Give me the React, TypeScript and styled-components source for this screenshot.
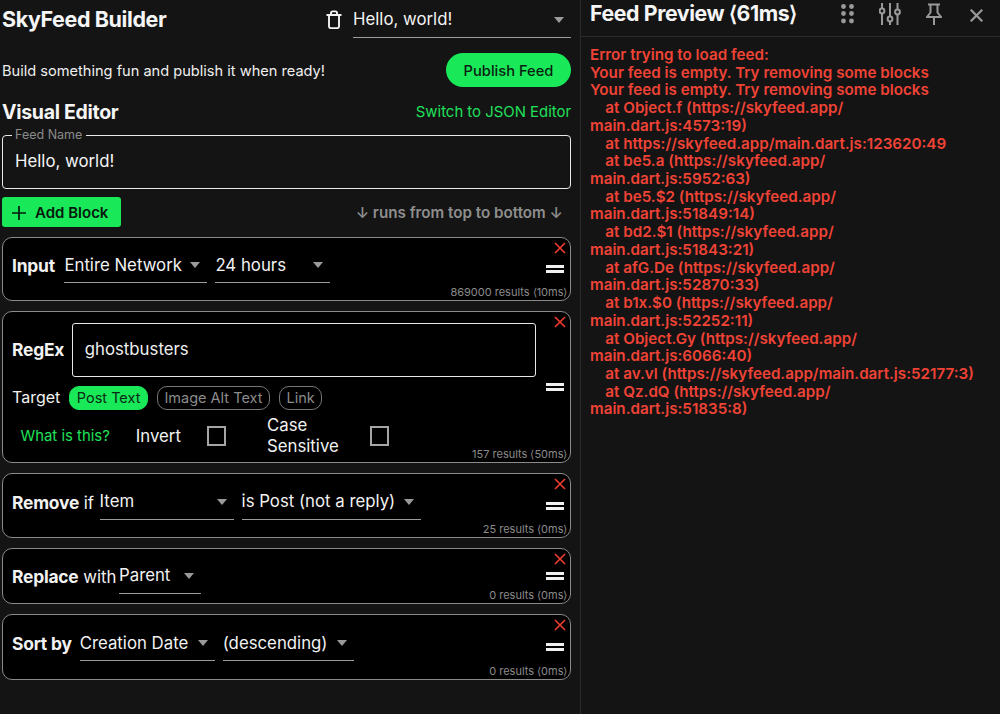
import styled, { createGlobalStyle } from "styled-components"

const GlobalStyle = createGlobalStyle`
html, body {
  margin: 0;
  padding: 0;
  background: #141414;
}
body {
  font-family: Inter, "Liberation Sans", sans-serif;
  color: #fff;
}
`

const Page = styled.div`
display: flex;
width: 1000px;
height: 714px;
overflow: hidden;
background: #141414;
`

const Editor = styled.div`
width: 569px;
padding-left: 2px;
padding-right: 9px;
display: flex;
flex-direction: column;
border-right: 1px solid #2b2b2b;
flex-shrink: 0;
`

const HeaderRow = styled.div`
display: flex;
align-items: center;
justify-content: space-between;
height: 38px;
`

const Title = styled.h1`
margin: 0;
font-size: 21.5px;
font-weight: 700;
letter-spacing: -0.4px;
color: #f5f5f5;
`

const FeedPicker = styled.div`
display: flex;
align-items: center;
gap: 11px;
`

const PublishRow = styled.div`
display: flex;
align-items: center;
justify-content: space-between;
margin-top: 15px;
height: 34px;
`

const Tagline = styled.span`
padding-top: 2px;
font-size: 14.6px;
color: #efefef;
`

const PublishButton = styled.button`
width: 125px;
height: 34px;
border: none;
border-radius: 17px;
background: #19e858;
color: #0a1d10;
font-family: inherit;
font-size: 14.7px;
font-weight: 500;
padding: 2px 0 0;
`

const SectionRow = styled.div`
display: flex;
align-items: center;
justify-content: space-between;
margin-top: 11px;
height: 28px;
`

const SectionTitle = styled.h2`
margin: 0;
font-size: 19.5px;
font-weight: 700;
letter-spacing: -0.3px;
color: #f5f5f5;
`

const GreenLink = styled.span`
font-size: 14.9px;
color: #20e05a;
`

const NameField = styled.fieldset`
margin: 2px 0 0;
padding: 0 12px;
height: 61px;
box-sizing: border-box;
border: 1.5px solid #e8e8e8;
border-radius: 4px;
background: #141414;
font-size: 16.8px;
color: #f4f4f4;
line-height: 38px;
min-width: 0;
`

const NameLegend = styled.legend`
padding: 0 4px 0 3px;
margin-left: -3px;
font-size: 12.5px;
line-height: 14px;
color: #8b8b8b;
`

const ActionRow = styled.div`
display: flex;
align-items: center;
justify-content: space-between;
margin-top: 8px;
height: 30px;
padding-right: 8px;
`

const AddButton = styled.button`
display: flex;
align-items: center;
gap: 9px;
width: 119px;
height: 30px;
padding: 1px 0 0 10px;
border: none;
border-radius: 3px;
background: #19e858;
color: #07190c;
font-family: inherit;
font-size: 15px;
font-weight: 600;
`

const RunsHint = styled.span`
padding-top: 1px;
font-size: 15.2px;
font-weight: 600;
color: #8e8e8e;
`

const BlockList = styled.div`
display: flex;
flex-direction: column;
gap: 10px;
margin-top: 10px;
`

const Block = styled.section<{ $height: number }>`
position: relative;
display: flex;
align-items: center;
height: ${(p) => p.$height}px;
box-sizing: border-box;
padding-left: 9px;
padding-right: 6.5px;
background: #000;
border: 1.5px solid #8a8a8a;
border-radius: 10px;
`

const BlockBody = styled.div`
flex: 1;
display: flex;
flex-direction: column;
min-width: 0;
`

const Line = styled.div<{ $gap?: number; $lift?: number; $top?: number; $end?: number }>`
display: flex;
align-items: center;
gap: ${(p) => p.$gap ?? 8}px;
margin-top: ${(p) => p.$top ?? -(p.$lift ?? 0)}px;
margin-right: ${(p) => p.$end ?? 0}px;
font-size: 16.8px;
color: #f2f2f2;
white-space: pre;
`

const Lead = styled.span<{ $after?: number }>`
margin-right: ${(p) => p.$after ?? 0}px;
`

const Strong = styled.b`
font-weight: 700;
font-size: 17.4px;
letter-spacing: -0.2px;
`

const Plain = styled.span`
font-weight: 400;
`

const TargetLabel = styled.span`
font-size: 16px;
margin-top: -2px;
`

const SelectBox = styled.div<{ $width: number; $big?: boolean }>`
display: flex;
align-items: center;
justify-content: space-between;
box-sizing: border-box;
width: ${(p) => p.$width}px;
height: ${(p) => (p.$big ? 37 : 35)}px;
padding-right: 7px;
padding-top: ${(p) => (p.$big ? 2 : 0)}px;
padding-bottom: 1px;
border-bottom: 1px solid #9c9c9c;
color: #f2f2f2;
font-size: 16.8px;
`

const Caret = styled.span`
flex-shrink: 0;
width: 0;
height: 0;
border-left: 5.5px solid transparent;
border-right: 5.5px solid transparent;
border-top: 6px solid #9a9a9a;
margin-top: 1px;
`

const SelectText = styled.span`
white-space: pre;
`

const RemoveIcon = styled.svg`
position: absolute;
top: 4px;
right: 4px;
width: 12px;
height: 12px;
`

const DragHandle = styled.div`
flex-shrink: 0;
width: 18px;
height: 8px;
border-top: 3px solid #f0f0f0;
border-bottom: 3px solid #f0f0f0;
box-sizing: border-box;
`

const ResultCount = styled.span`
position: absolute;
right: 2.5px;
bottom: 1.5px;
font-size: 11px;
color: #8b8b8b;
`

const RegexInput = styled.div`
flex: 1;
height: 54px;
box-sizing: border-box;
padding-left: 12px;
border: 1.5px solid #e8e8e8;
border-radius: 3px;
font-size: 16.8px;
line-height: 51px;
color: #efefef;
`

const Chip = styled.span<{ $active?: boolean }>`
display: inline-flex;
align-items: center;
justify-content: center;
box-sizing: border-box;
height: 24px;
padding: 0 6.5px;
border-radius: 10px;
font-size: 14.5px;
background: ${(p) => (p.$active ? "#19e858" : "transparent")};
color: ${(p) => (p.$active ? "#0a2a14" : "#8b8b8b")};
border: 1px solid ${(p) => (p.$active ? "#19e858" : "#777")};
`

const WhatLink = styled(GreenLink)`
margin-left: 8.5px;
margin-right: 26px;
`

const Checkbox = styled.span<{ $left: number; $right?: number }>`
flex-shrink: 0;
width: 19px;
height: 20px;
box-sizing: border-box;
margin-left: ${(p) => p.$left}px;
margin-right: ${(p) => p.$right ?? 0}px;
border: 2px solid #a5a5a5;
`

const TwoLine = styled.span`
line-height: 21px;
white-space: pre;
`

const Preview = styled.div`
flex: 1;
display: flex;
flex-direction: column;
min-width: 0;
`

const PreviewHeader = styled.div`
display: flex;
align-items: center;
justify-content: space-between;
height: 37px;
box-sizing: border-box;
padding: 0 17px 10px 9px;
border-bottom: 1px solid #2b2b2b;
`

const PreviewTitle = styled.h2`
margin: 0;
font-size: 21.3px;
font-weight: 700;
letter-spacing: -0.4px;
color: #f5f5f5;
white-space: pre;
`

const IconBar = styled.div`
display: flex;
align-items: center;
gap: 25px;
margin-top: 1px;
color: #999;
`

const CloseIcon = styled.svg`
margin-left: 3px;
margin-top: 3px;
`

const ErrorText = styled.pre`
margin: 9px 0 0 9px;
font-family: inherit;
font-size: 15.2px;
font-weight: 600;
line-height: 17.72px;
color: #ef4336;
white-space: pre;
`

const errorLog = `Error trying to load feed:
Your feed is empty. Try removing some blocks
Your feed is empty. Try removing some blocks
    at Object.f (https://skyfeed.app/
main.dart.js:4573:19)
    at https://skyfeed.app/main.dart.js:123620:49
    at be5.a (https://skyfeed.app/
main.dart.js:5952:63)
    at be5.$2 (https://skyfeed.app/
main.dart.js:51849:14)
    at bd2.$1 (https://skyfeed.app/
main.dart.js:51843:21)
    at afG.De (https://skyfeed.app/
main.dart.js:52870:33)
    at b1x.$0 (https://skyfeed.app/
main.dart.js:52252:11)
    at Object.Gy (https://skyfeed.app/
main.dart.js:6066:40)
    at av.vl (https://skyfeed.app/main.dart.js:52177:3)
    at Qz.dQ (https://skyfeed.app/
main.dart.js:51835:8)`

const Select = ({ width, label, big }: { width: number; label: string; big?: boolean }) => (
    <SelectBox $width={width} $big={big}>
        <SelectText>{label}</SelectText>
        <Caret />
    </SelectBox>
)

const Remove = () => (
    <RemoveIcon viewBox="0 0 12 12">
        <path d="M1 1l10 10M11 1L1 11" stroke="#ee3b30" strokeWidth="1.7" fill="none" />
    </RemoveIcon>
)

const App = () => {
    return (
        <>
            <GlobalStyle />
            <Page>
                <Editor>
                    <HeaderRow>
                        <Title>SkyFeed Builder</Title>
                        <FeedPicker>
                            <svg width="16" height="19" viewBox="0 0 16 19" fill="none" stroke="#f2f2f2" strokeWidth="1.9">
                                <path d="M0.5 5h15M3 5v11.2c0 1.100.8 1.900 1.800 1.900h6.400c1 0 1.800-.8 1.800-1.900V5M5 5V3c0-1 .6-1.600 1.500-1.600h3c.9 0 1.500.6 1.500 1.600v2" />
                            </svg>
                            <Select width={218} label="Hello, world!" big />
                        </FeedPicker>
                    </HeaderRow>
                    <PublishRow>
                        <Tagline>Build something fun and publish it when ready!</Tagline>
                        <PublishButton>Publish Feed</PublishButton>
                    </PublishRow>
                    <SectionRow>
                        <SectionTitle>Visual Editor</SectionTitle>
                        <GreenLink>Switch to JSON Editor</GreenLink>
                    </SectionRow>
                    <NameField>
                        <NameLegend>Feed Name</NameLegend>
                        Hello, world!
                    </NameField>
                    <ActionRow>
                        <AddButton>
                            <svg width="14" height="14" viewBox="0 0 14 14">
                                <path d="M7 0v14M0 7h14" stroke="#07190c" strokeWidth="1.7" />
                            </svg>
                            Add Block
                        </AddButton>
                        <RunsHint>↓ runs from top to bottom ↓</RunsHint>
                    </ActionRow>
                    <BlockList>
                        <Block $height={64}>
                            <Remove />
                            <BlockBody>
                                <Line $lift={7}>
                                    <Lead $after={1.5}>
                                        <Strong>Input</Strong>
                                    </Lead>
                                    <Select width={143} label="Entire Network" />
                                    <Select width={115} label="24 hours" />
                                </Line>
                            </BlockBody>
                            <DragHandle />
                            <ResultCount>869000 results ⟨10ms⟩</ResultCount>
                        </Block>
                        <Block $height={152}>
                            <Remove />
                            <BlockBody>
                                <Line $top={5} $end={10}>
                                    <Lead $after={-0.5}>
                                        <Strong>RegEx</Strong>
                                    </Lead>
                                    <RegexInput>ghostbusters</RegexInput>
                                </Line>
                                <Line $gap={9} $top={9}>
                                    <TargetLabel>Target</TargetLabel>
                                    <Chip $active>Post Text</Chip>
                                    <Chip>Image Alt Text</Chip>
                                    <Chip>Link</Chip>
                                </Line>
                                <Line $gap={0} $top={5}>
                                    <WhatLink>What is this?</WhatLink>
                                    <Plain>Invert</Plain>
                                    <Checkbox $left={26} $right={41} />
                                    <TwoLine>{"Case\nSensitive"}</TwoLine>
                                    <Checkbox $left={31} />
                                </Line>
                            </BlockBody>
                            <DragHandle />
                            <ResultCount>157 results ⟨50ms⟩</ResultCount>
                        </Block>
                        <Block $height={65}>
                            <Remove />
                            <BlockBody>
                                <Line $lift={7}>
                                    <Lead $after={-2.5}>
                                        <Strong>Remove</Strong> if
                                    </Lead>
                                    <Select width={134} label="Item" />
                                    <Select width={179} label="is Post (not a reply)" />
                                </Line>
                            </BlockBody>
                            <DragHandle />
                            <ResultCount>25 results ⟨0ms⟩</ResultCount>
                        </Block>
                        <Block $height={56}>
                            <Remove />
                            <BlockBody>
                                <Line $gap={5}>
                                    <Lead $after={-2.5}>
                                        <Strong>Replace</Strong> with
                                    </Lead>
                                    <Select width={82} label="Parent" />
                                </Line>
                            </BlockBody>
                            <DragHandle />
                            <ResultCount>0 results ⟨0ms⟩</ResultCount>
                        </Block>
                        <Block $height={66}>
                            <Remove />
                            <BlockBody>
                                <Line $lift={7}>
                                    <Strong>Sort by</Strong>
                                    <Select width={135} label="Creation Date" />
                                    <Select width={131} label="(descending)" />
                                </Line>
                            </BlockBody>
                            <DragHandle />
                            <ResultCount>0 results ⟨0ms⟩</ResultCount>
                        </Block>
                    </BlockList>
                </Editor>
                <Preview>
                    <PreviewHeader>
                        <PreviewTitle>Feed Preview ⟨61ms⟩</PreviewTitle>
                        <IconBar>
                            <svg width="13" height="20" viewBox="0 0 13 20" fill="currentColor">
                                <circle cx="2.5" cy="2.500" r="2.400" />
                                <circle cx="10.500" cy="2.500" r="2.400" />
                                <circle cx="2.5" cy="9.500" r="2.400" />
                                <circle cx="10.500" cy="9.500" r="2.400" />
                                <circle cx="2.5" cy="17" r="2.400" />
                                <circle cx="10.500" cy="17" r="2.400" />
                            </svg>
                            <svg width="22" height="22" viewBox="0 0 22 22" fill="none" stroke="currentColor" strokeWidth="2">
                                <path d="M3 0v5.500M3 10.500V22M11 0v13.500M11 18.500V22M18.500 0v6.500M18.500 11.500V22" />
                                <circle cx="3" cy="8" r="2.400" />
                                <circle cx="11" cy="16" r="2.400" />
                                <circle cx="18.500" cy="9" r="2.400" />
                            </svg>
                            <svg width="16" height="22" viewBox="0 0 16 22" fill="none" stroke="currentColor" strokeWidth="2">
                                <path d="M2 1.500h12M4.500 1.500v8L1 14h14l-3.500-4.500v-8M8 14v8" />
                            </svg>
                            <CloseIcon width="13" height="13" viewBox="0 0 13 13" fill="none" stroke="currentColor" strokeWidth="2.200">
                                <path d="M.7.7l11.600 11.600M12.300.7L.7 12.300" />
                            </CloseIcon>
                        </IconBar>
                    </PreviewHeader>
                    <ErrorText>{errorLog}</ErrorText>
                </Preview>
            </Page>
        </>
    )
}

export default App
